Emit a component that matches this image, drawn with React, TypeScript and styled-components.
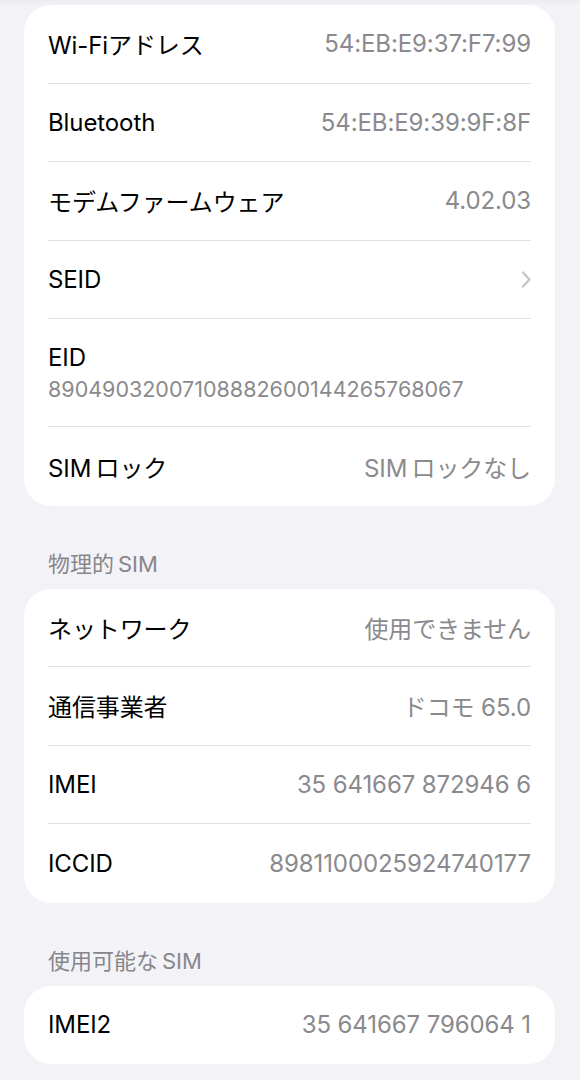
import * as React from "react";
import styled, { createGlobalStyle } from "styled-components";

const GlobalStyle = createGlobalStyle`
  html, body {
    margin: 0;
    padding: 0;
    background: #f2f2f7;
  }
  body {
    font-family: Inter, "Noto Sans CJK JP", sans-serif;
    -webkit-font-smoothing: antialiased;
  }
`;

interface IItem {
  label: string;
  value?: string;
  chevron?: boolean;
  stacked?: boolean;
}

interface ISection {
  title?: string;
  items: IItem[];
}

const t = "\u2009";

const sections: ISection[] = [
  {
    items: [
      { label: "Wi-Fiアドレス", value: "54:EB:E9:37:F7:99" },
      { label: "Bluetooth", value: "54:EB:E9:39:9F:8F" },
      { label: "モデムファームウェア", value: "4.02.03" },
      { label: "SEID", chevron: true },
      { label: "EID", value: "89049032007108882600144265768067", stacked: true },
      { label: `SIM${t}ロック`, value: `SIM${t}ロックなし` },
    ],
  },
  {
    title: `物理的${t}SIM`,
    items: [
      { label: "ネットワーク", value: "使用できません" },
      { label: "通信事業者", value: "ドコモ 65.0" },
      { label: "IMEI", value: "35 641667 872946 6" },
      { label: "ICCID", value: "8981100025924740177" },
    ],
  },
  {
    title: `使用可能な${t}SIM`,
    items: [{ label: "IMEI2", value: "35 641667 796064 1" }],
  },
];

const Chevron = () => (
  <svg width="10" height="17" viewBox="0 0 10 17" fill="none">
    <path d="M2 1.5 L8.5 8.5 L2 15.5" stroke="#c4c4c7" strokeWidth="2.2" strokeLinecap="round" strokeLinejoin="round" />
  </svg>
);

export default function App() {
  return (
    <Page>
      <GlobalStyle />
      {sections.map((section, si) => (
        <Section key={si}>
          {section.title && <SectionTitle>{section.title}</SectionTitle>}
          <Card>
            {section.items.map((item) =>
              item.stacked ? (
                <StackedRow key={item.label}>
                  <Label>{item.label}</Label>
                  <SubValue>{item.value}</SubValue>
                </StackedRow>
              ) : (
                <Row key={item.label}>
                  <Label>{item.label}</Label>
                  {item.value && <Value>{item.value}</Value>}
                  {item.chevron && <Chevron />}
                </Row>
              )
            )}
          </Card>
        </Section>
      ))}
    </Page>
  );
}

const Page = styled.div`
  width: 580px;
  min-height: 1080px;
  box-sizing: border-box;
  padding: 5px 25px 0 24px;
  background: linear-gradient(#ebebf0 0px, #f2f2f7 6px);
  display: flex;
  flex-direction: column;
  gap: 42px;
`;

const Section = styled.section`
  display: flex;
  flex-direction: column;
`;

const SectionTitle = styled.div`
  font-size: 22px;
  color: #86868b;
  padding: 0 24px;
  line-height: 26px;
  margin-top: 3px;
  margin-bottom: 12px;
`;

const Card = styled.div`
  background: #ffffff;
  border-radius: 27px;
  overflow: hidden;
`;

const Row = styled.div`
  height: 78.5px;
  box-sizing: border-box;
  margin: 0 24px;
  display: flex;
  align-items: center;
  justify-content: space-between;
  gap: 16px;
  border-bottom: 1px solid #e2e2e6;

  &:last-child {
    border-bottom: none;
  }
`;

const StackedRow = styled.div`
  height: 108px;
  box-sizing: border-box;
  margin: 0 24px;
  display: flex;
  flex-direction: column;
  justify-content: center;
  gap: 4px;
  border-bottom: 1px solid #e2e2e6;
`;

const Label = styled.span`
  font-size: 24px;
  color: #000000;
  white-space: nowrap;
  letter-spacing: -0.1px;
`;

const Value = styled.span`
  font-size: 24px;
  color: #8a8a8e;
  white-space: nowrap;
  letter-spacing: -0.1px;
`;

const SubValue = styled.span`
  font-size: 21.5px;
  color: #8a8a8e;
  white-space: nowrap;
`;
